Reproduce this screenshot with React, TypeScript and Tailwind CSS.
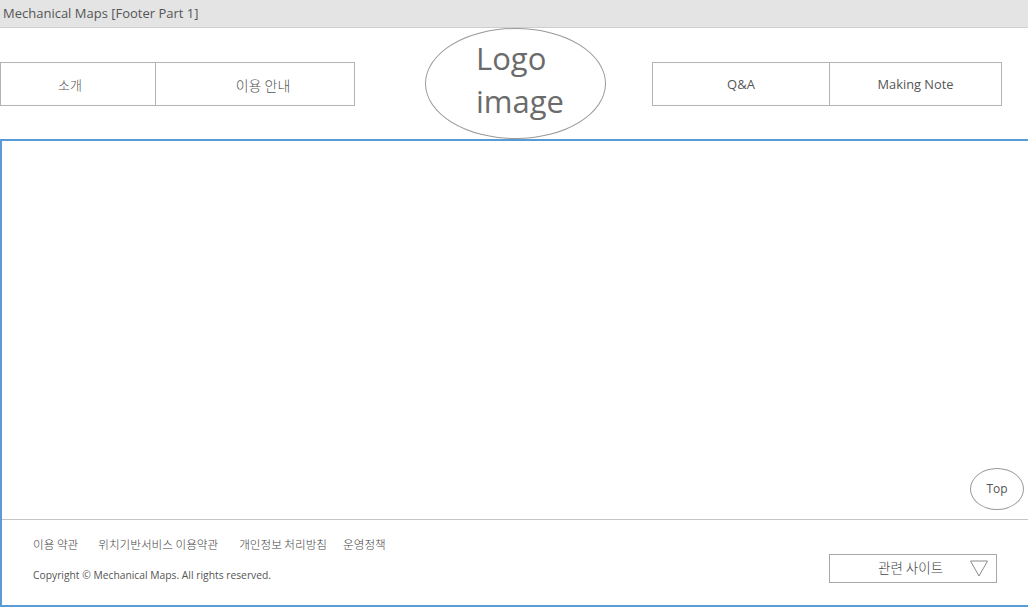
const font = { fontFamily: '"Open Sans", "Noto Sans CJK KR", sans-serif' };
const ko = { fontFamily: '"Noto Sans CJK KR", "Open Sans", sans-serif' };

function NavBox({ label, w, size, extra, korean }: { label: string; w: string; size: string; extra?: string; korean?: boolean }) {
  return (
    <div
      className={`${w} h-[44px] flex items-center justify-center pt-[3px] border border-[#b4b4b4] ${size} ${korean ? 'font-light text-[#555]' : 'text-[#555]'} bg-white ${extra ?? ''}`}
      style={korean ? ko : undefined}
    >
      {label}
    </div>
  );
}

export default function App() {
  return (
    <div className="w-[1028px] h-[607px] overflow-hidden bg-white flex flex-col" style={font}>
      {/* window title */}
      <div className="h-[28px] shrink-0 bg-[#e4e4e4] border-b border-[#cfcfcf] px-[3px] flex items-center text-[13px] text-[#555]">
        Mechanical Maps [Footer Part 1]
      </div>

      {/* header */}
      <div className="h-[111px] shrink-0 flex items-center">
        <div className="flex">
          <NavBox label="소개" w="w-[156px]" size="text-[13px]" extra="pr-[16px]" korean />
          <div className="-ml-px">
            <NavBox label="이용 안내" w="w-[200px]" size="text-[14px]" extra="pl-[16px]" korean />
          </div>
        </div>
        <div className="ml-[70px] w-[181px] h-[111px] rounded-[50%] border border-[#9a9a9a] flex flex-col items-start justify-center pl-[50px] pb-[8px] text-[31px] leading-[43px] text-[#6b6b6b]">
          <span>Logo</span>
          <span>image</span>
        </div>
        <div className="ml-[46px] flex">
          <NavBox label="Q&A" w="w-[178px]" size="text-[13px]" />
          <div className="-ml-px">
            <NavBox label="Making Note" w="w-[173px]" size="text-[12.8px]" />
          </div>
        </div>
      </div>

      {/* blue frame */}
      <div className="flex-1 flex flex-col border-2 border-r-0 border-[#5b9bd5]">
        <div className="flex-1 flex items-end justify-end pr-[4px] pb-[9px]">
          <div className="w-[54px] h-[42px] rounded-[50%] border border-[#9a9a9a] flex items-center justify-center text-[12px] text-[#555]">
            Top
          </div>
        </div>

        <div className="h-[86px] shrink-0 border-t border-[#c4c4c4] flex items-start justify-between pl-[31px] pr-[31px]">
          <div className="flex flex-col pt-[16px]">
            <div className="flex text-[11.6px] font-light text-[#444] leading-[16px]" style={ko}>
              <span>이용 약관</span>
              <span className="ml-[20px]">위치기반서비스 이용약관</span>
              <span className="ml-[21px]">개인정보 처리방침</span>
              <span className="ml-[16px]">운영정책</span>
            </div>
            <div className="mt-[16px] text-[10.3px] text-[#555] leading-[14px]">
              Copyright © Mechanical Maps. All rights reserved.
            </div>
          </div>
          <div className="mt-[34px] w-[168px] h-[29px] border border-[#a8a8a8] flex items-center pl-[48px] pr-[8px] text-[13.5px] font-light text-[#444]">
            <span className="flex-1 pb-[2px]" style={ko}>관련 사이트</span>
            <svg width="18" height="17" viewBox="0 0 18 17" fill="none">
              <path d="M0.5 1 L17.5 1 L9 16 Z" stroke="#8a8a8a" strokeWidth="1" />
            </svg>
          </div>
        </div>
      </div>
    </div>
  );
}
